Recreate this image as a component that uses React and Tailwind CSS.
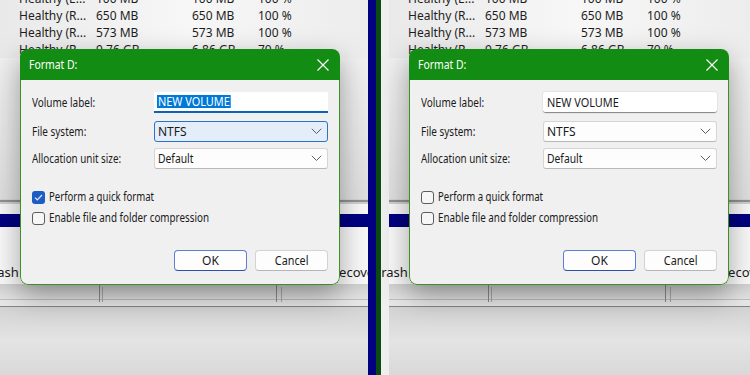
import React from "react";

const FONT = "font-['Noto_Sans',_'Open_Sans',_sans-serif]";

function T({ sx, center, children }) {
  return (
    <span className={`inline-block whitespace-nowrap ${sx} ${center ? "origin-center" : "origin-left"}`}>
      {children}
    </span>
  );
}

function Chevron() {
  return (
    <svg width="11" height="7" viewBox="0 0 11 7" className="shrink-0">
      <path d="M0.8 0.8 L5.5 5.5 L10.2 0.8" fill="none" stroke="#5f5f5f" strokeWidth="1" />
    </svg>
  );
}

function CloseX() {
  return (
    <svg width="12" height="12" viewBox="0 0 12 12">
      <path d="M0.5 0.5 L11.5 11.5 M11.5 0.5 L0.5 11.5" stroke="#ffffff" strokeWidth="1.2" />
    </svg>
  );
}

function Checkbox({ checked }) {
  if (checked) {
    return (
      <div className="w-[13px] h-[13px] rounded-[3px] bg-[#1c5cc3] flex items-center justify-center shrink-0">
        <svg width="9" height="7" viewBox="0 0 9 7">
          <path d="M1 3.6 L3.3 5.8 L8 1" fill="none" stroke="#dfe9fb" strokeWidth="1.2" />
        </svg>
      </div>
    );
  }
  return <div className="w-[13px] h-[13px] rounded-[3px] border border-[#5c5c5c] bg-[#f6f6f6] shrink-0" />;
}

function Dialog({ selected }) {
  return (
    <div className="absolute left-[20px] top-[49px] w-[320px] h-[236px] rounded-[8px] overflow-hidden shadow-[0_10px_28px_rgba(0,0,0,0.35)] flex flex-col">
      <div className="h-[31px] bg-[#128c12] flex items-center justify-between pl-[9px] pr-[11px] shrink-0">
        <span className="text-white text-[13px] leading-none">
          <T sx="scale-x-[0.8]">Format D:</T>
        </span>
        <CloseX />
      </div>
      <div className="flex-1 bg-[#f0f0f0] border-x border-b border-[#3f8f22] rounded-b-[8px] pl-[11px] pr-[11px] flex flex-col text-[#1b1b1b]">
        <div className="flex items-center mt-[12px] h-[21px]">
          <span className="w-[122px]">
            <T sx="scale-x-[0.83]">Volume label:</T>
          </span>
          {selected ? (
            <div className="flex-1 h-[21px] bg-white border-b-2 border-[#0a63b8] flex items-center pl-[3px]">
              <span className="bg-[#0078d7] text-white leading-[13px] px-[1px] inline-block scale-x-[0.91] origin-left">NEW VOLUME</span>
            </div>
          ) : (
            <div className="flex-1 h-[21px] bg-white rounded-[3px] border-b border-[#8d8d8d] shadow-[0_0_0_1px_#e4e4e4] flex items-center pl-[3px]">
              <span className="leading-[13px] px-[1px] inline-block scale-x-[0.91] origin-left">NEW VOLUME</span>
            </div>
          )}
        </div>
        <div className="flex items-center mt-[8px] h-[21px]">
          <span className="w-[122px]">
            <T sx="scale-x-[0.83]">File system:</T>
          </span>
          <div
            className={
              selected
                ? "flex-1 h-[21px] rounded-[3px] bg-[#e3eefa] border border-[#2a73c9] flex items-center justify-between pl-[3px] pr-[5px]"
                : "flex-1 h-[21px] rounded-[3px] bg-[#fdfdfd] border border-[#d5d5d5] border-b-[#b8b8b8] flex items-center justify-between pl-[3px] pr-[5px]"
            }
          >
            <span>NTFS</span>
            <Chevron />
          </div>
        </div>
        <div className="flex items-center mt-[6px] h-[21px]">
          <span className="w-[122px]">
            <T sx="scale-x-[0.82]">Allocation unit size:</T>
          </span>
          <div className="flex-1 h-[21px] rounded-[3px] bg-[#fdfdfd] border border-[#d5d5d5] border-b-[#b8b8b8] flex items-center justify-between pl-[3px] pr-[5px]">
            <T sx="scale-x-[0.86]">Default</T>
            <Chevron />
          </div>
        </div>
        <div className="flex items-center gap-[4px] mt-[20px] h-[16px]">
          <Checkbox checked={selected} />
          <T sx="scale-x-[0.8]">Perform a quick format</T>
        </div>
        <div className="flex items-center gap-[4px] mt-[5px] h-[16px]">
          <Checkbox checked={false} />
          <T sx="scale-x-[0.82]">Enable file and folder compression</T>
        </div>
        <div className="flex justify-end gap-[8px] mt-[24px]">
          <div className="w-[73px] h-[21px] rounded-[4px] bg-[#fdfdfd] border border-[#5f7fd2] border-b-[#2f4fa8] flex items-center justify-center">
            OK
          </div>
          <div className="w-[73px] h-[21px] rounded-[4px] bg-[#fdfdfd] border border-[#d3d3d3] border-b-[#b5b5b5] flex items-center justify-center">
            <T sx="scale-x-[0.9]" center>
              Cancel
            </T>
          </div>
        </div>
      </div>
    </div>
  );
}

function Row({ a, b, c, d }) {
  return (
    <div className="h-[17px] flex items-center text-[#1d1d1d] pl-[19px] whitespace-nowrap">
      <span className="w-[77px]">{a}</span>
      <span className="w-[96px]">{b}</span>
      <span className="w-[66px]">{c}</span>
      <span>{d}</span>
    </div>
  );
}

function Panel({ selected, shift, width }) {
  return (
    <div className={`${width} h-[375px] overflow-hidden shrink-0 bg-[#efefef]`}>
      <div className={`relative w-[376px] h-[375px] flex flex-col ${shift}`}>
        <div className="-mt-[10px] bg-gradient-to-r from-[#e9e9e9] via-[#f7f7f7] to-[#ececec]">
          <Row a="Healthy (E..." b="100 MB" c="100 MB" d="100 %" />
          <Row a="Healthy (R..." b="650 MB" c="650 MB" d="100 %" />
          <Row a="Healthy (R..." b="573 MB" c="573 MB" d="100 %" />
          <Row a="Healthy (R..." b="9.76 GB" c="6.86 GB" d="70 %" />
        </div>
        <div className="h-[141px] bg-gradient-to-b from-[#f0f0f0] to-[#dedede]" />
        <div className="h-px bg-[#d4d4d4]" />
        <div className="h-[2px] bg-[#909090]" />
        <div className="h-[2px] bg-[#cfcfcf]" />
        <div className="h-[10px] bg-[#f7f7f7]" />
        <div className="h-[13px] bg-[#000080]" />
        <div className="h-[57px] bg-[#f8f8f8] relative text-[13px]">
          <span className="absolute left-[-16px] top-[37px] leading-[16px] text-[#1b1b1b] whitespace-nowrap">Crash</span>
          <span className="absolute left-[331px] top-[37px] leading-[16px] text-[#1b1b1b] whitespace-nowrap">Recovery</span>
        </div>
        <div className="h-[15px] bg-gradient-to-b from-[#cfcfcf] to-[#e2e2e2] relative">
          <div className="absolute left-[99px] top-0 h-[18px] w-px bg-[#8a8a8a]" />
          <div className="absolute left-[102px] top-[3px] h-[15px] w-px bg-[#a8a8a8]" />
          <div className="absolute left-[276px] top-0 h-[18px] w-px bg-[#8a8a8a]" />
          <div className="absolute left-[281px] top-[3px] h-[15px] w-px bg-[#a8a8a8]" />
        </div>
        <div className="h-px bg-[#bdbdbd]" />
        <div className="h-[6px] bg-[#e6e6e6]" />
        <div className="h-px bg-[#858585]" />
        <div className="flex-1 bg-gradient-to-b from-[#d3d3d3] via-[#e4e4e4] to-[#d9d9d9]" />
        <Dialog selected={selected} />
      </div>
    </div>
  );
}

export default function App() {
  return (
    <div className={`w-[750px] h-[375px] flex overflow-hidden text-[12px] ${FONT}`}>
      <Panel selected={true} shift="" width="w-[368px]" />
      <div className="w-[8px] h-[375px] bg-[#000080] shrink-0" />
      <div className="w-[5px] h-[375px] bg-[#0b4a10] shrink-0" />
      <Panel selected={false} shift="ml-[8px]" width="w-[369px]" />
    </div>
  );
}
